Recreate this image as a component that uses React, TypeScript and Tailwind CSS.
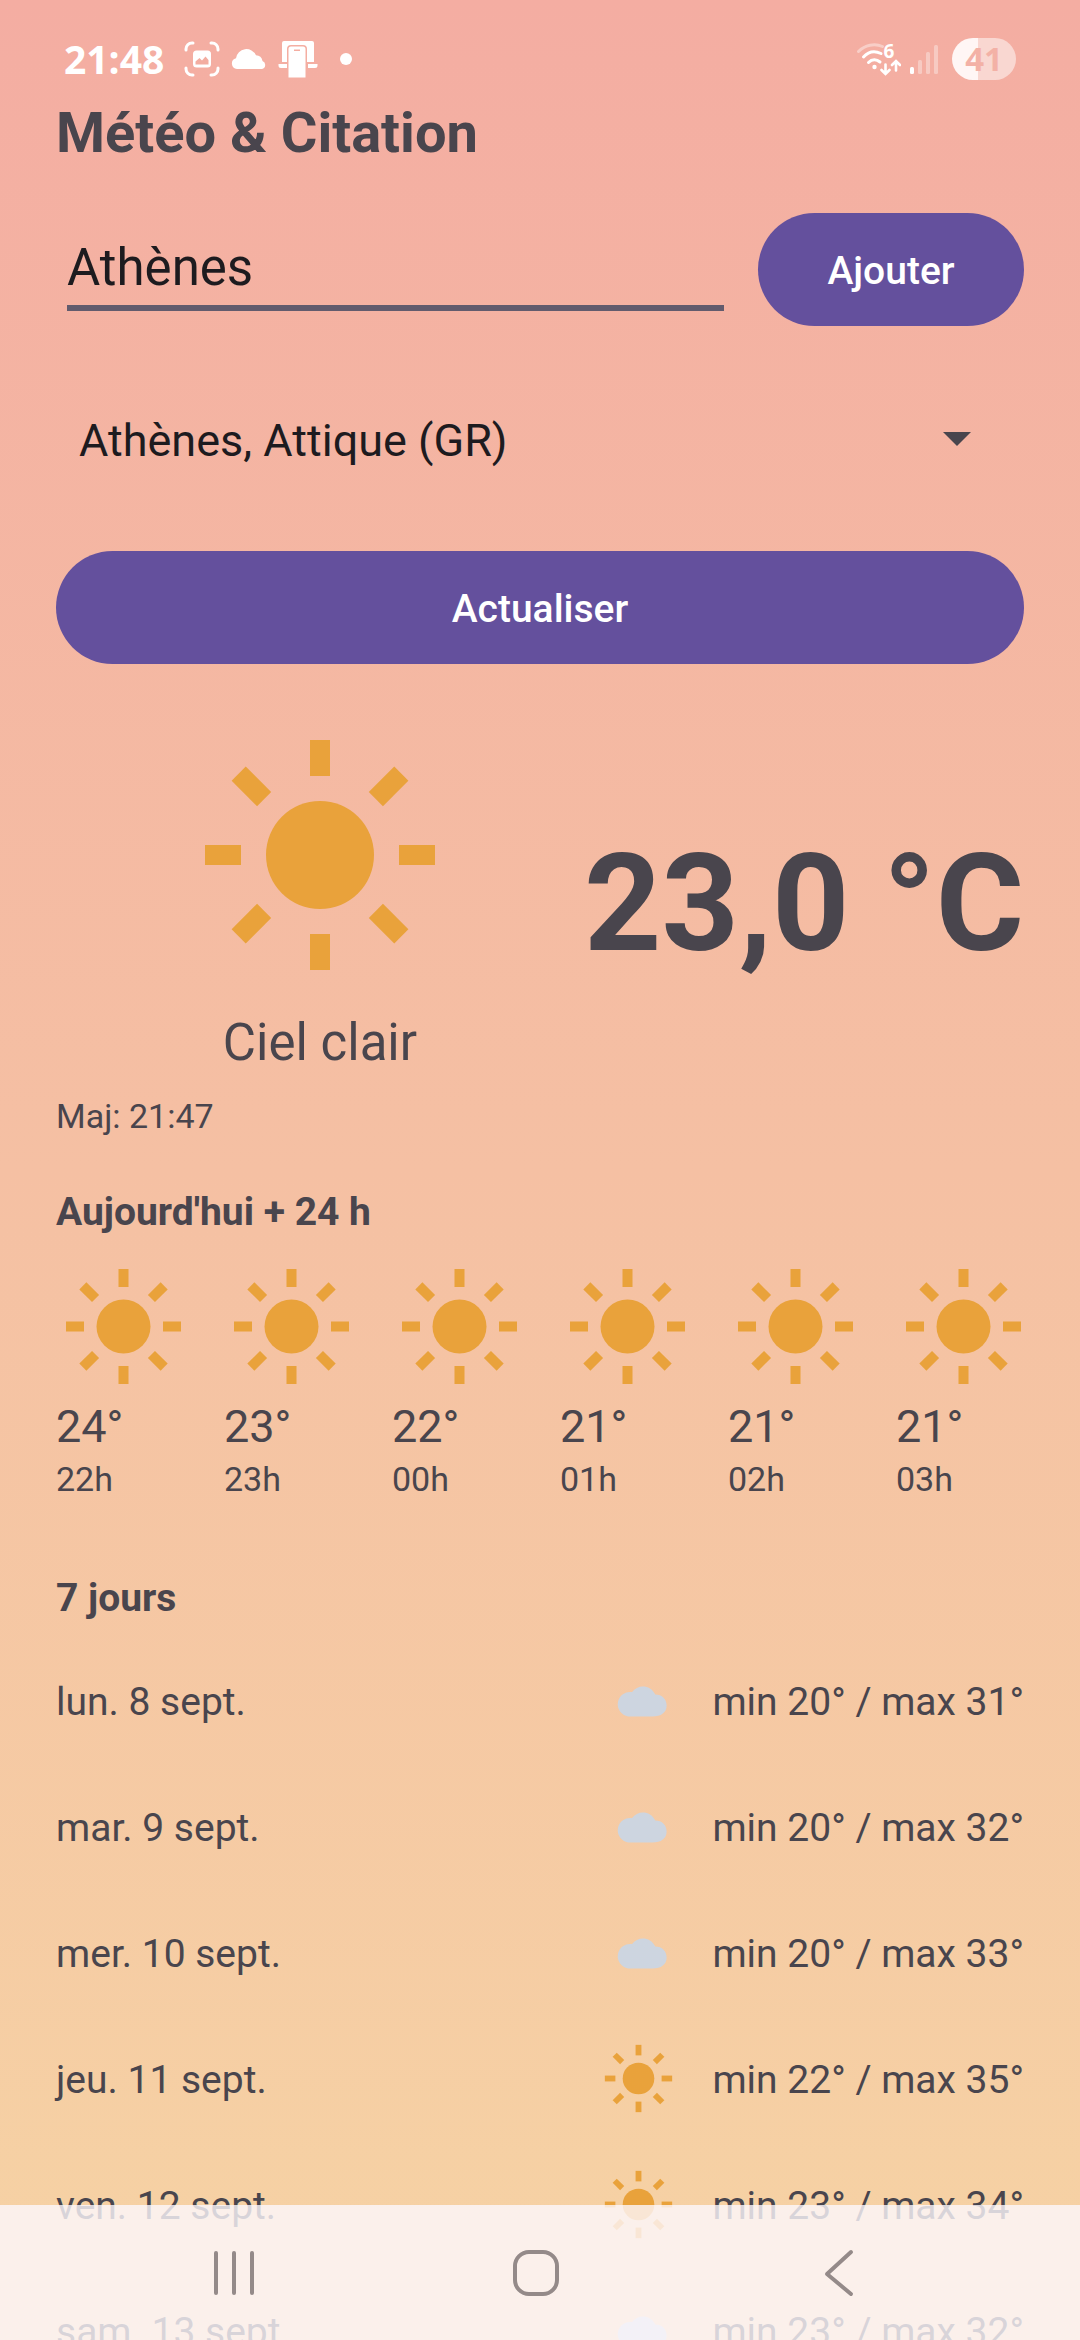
import { useState } from "react";

const RAY_ANGLES = [0, 45, 90, 135, 180, 225, 270, 315];

function Sun({ className }: { className: string }) {
  return (
    <svg viewBox="-135 -135 270 270" className={className} fill="#e9a23b" aria-hidden="true">
      <circle r="54" />
      {RAY_ANGLES.map((angle) => (
        <rect key={angle} x="-10" y="-115" width="20" height="36" transform={`rotate(${angle})`} />
      ))}
    </svg>
  );
}

function Cloud({ className }: { className: string }) {
  return (
    <svg viewBox="-40 -40 80 80" className={className} fill="#cdd5e0" aria-hidden="true">
      <path d="M-10.500 16.200A12.500 12.500 0 0 1-6.500-8.500C-1-16.500 12-16.500 17-6C24-6 28.500-1 28.500 5C28.500 12 23 16.200 14 16.200z" />
    </svg>
  );
}

function CaptureIcon() {
  return (
    <svg viewBox="0 0 36 36" className="size-9" fill="none" aria-hidden="true">
      <g stroke="#fff" strokeWidth="3" strokeLinecap="round">
        <path d="M2 9V8a6 6 0 0 1 6-6h1M27 2h1a6 6 0 0 1 6 6v1M34 27v1a6 6 0 0 1-6 6h-1M9 34H8a6 6 0 0 1-6-6v-1" />
      </g>
      <rect x="9" y="9.500" width="18" height="17" rx="3.500" fill="#fff" />
      <path d="M11.500 23.500v-3l4-3.500 2.500 2.500 3.500-4 3 3.500v4.500z" fill="#f3ada1" />
    </svg>
  );
}

function StatusCloud() {
  return (
    <svg viewBox="0 0 36 22" className="h-[22px] w-9" fill="#fff" aria-hidden="true">
      <path d="M6 21a5.500 5.500 0 0 1-1-10.800A10.500 10.500 0 0 1 25 7.300a7 7 0 0 1 6.500 5.700A4.200 4.200 0 0 1 31 21z" />
    </svg>
  );
}

function LinkedDevices() {
  return (
    <svg viewBox="0 0 40 38" className="h-[38px] w-10" fill="#fff" aria-hidden="true">
      <path d="M4 22V3a2 2 0 0 1 2-2h28a2 2 0 0 1 2 2v19h-7V9a4 4 0 0 0-4-4H13a4 4 0 0 0-4 4v13z" />
      <path d="M0.500 24H9v4H3a2.500 2.500 0 0 1-2.500-2.500zM30 24h9.500v1.500A2.500 2.500 0 0 1 37 28h-7z" />
      <path d="M13 6.500h12a2.500 2.500 0 0 1 2.500 2.500v28.500h-17V9A2.500 2.500 0 0 1 13 6.500zM16 9.500v1.500h6V9.500z" fillRule="evenodd" />
    </svg>
  );
}

function WifiIcon() {
  return (
    <svg viewBox="0 0 44 40" className="h-10 w-11" fill="none" aria-hidden="true">
      <g stroke="#fff" strokeWidth="3" strokeLinecap="round">
        <path d="M1.500 12.500C8 6 17.500 4 25.500 7.500" opacity="0.400" />
        <path d="M6.500 18C11 13 17.500 11.500 24 14.500" />
        <path d="M11.500 23.500c3.500-3.500 8-3.500 11.500-0.500" />
        <path d="M28.500 25.500v8.500M24.500 31l4 4 4-4M39 31.500v-8.500M35 26l4-4 4 4" strokeWidth="2.600" />
      </g>
      <circle cx="17.500" cy="28" r="2.200" fill="#fff" />
      <text x="26.500" y="19" fontSize="19" fontWeight="700" fontFamily="'Open Sans', sans-serif" fill="#fff">
        6
      </text>
    </svg>
  );
}

function SignalIcon() {
  return (
    <svg viewBox="0 0 28 30" className="h-[30px] w-7" fill="#fff" aria-hidden="true">
      <rect x="0" y="23" width="4" height="7" rx="1.500" />
      <g opacity="0.350">
        <rect x="8" y="16" width="4" height="14" rx="1.500" />
        <rect x="16" y="8" width="4" height="22" rx="1.500" />
        <rect x="24" y="1" width="4" height="29" rx="1.500" />
      </g>
    </svg>
  );
}

function StatusBar() {
  return (
    <header className="flex h-[100px] items-center justify-between pt-[18px] pr-16 pl-16 text-white">
      <div className="flex items-center">
        <time className="font-['Open_Sans',sans-serif] text-[39px] leading-[42px] font-bold">21:48</time>
        <span className="ml-5 flex items-center gap-[11px]">
          <CaptureIcon />
          <StatusCloud />
          <LinkedDevices />
        </span>
        <span className="ml-[22px] size-3 rounded-full bg-white" />
      </div>
      <div className="flex items-center">
        <WifiIcon />
        <span className="ml-[9px]">
          <SignalIcon />
        </span>
        <span className="ml-3.5 flex h-[42px] w-16 items-center justify-center rounded-full bg-[linear-gradient(90deg,#fff6f5_41%,#f9d7d1_41%)] font-['Open_Sans',sans-serif] text-[33px] leading-[42px] font-bold text-[#f3b1a6]">
          41
        </span>
      </div>
    </header>
  );
}

const HOURS = [
  { temp: "24°", hour: "22h" },
  { temp: "23°", hour: "23h" },
  { temp: "22°", hour: "00h" },
  { temp: "21°", hour: "01h" },
  { temp: "21°", hour: "02h" },
  { temp: "21°", hour: "03h" },
];

const DAYS = [
  { day: "lun. 8 sept.", sky: "cloud", range: "min 20° / max 31°" },
  { day: "mar. 9 sept.", sky: "cloud", range: "min 20° / max 32°" },
  { day: "mer. 10 sept.", sky: "cloud", range: "min 20° / max 33°" },
  { day: "jeu. 11 sept.", sky: "sun", range: "min 22° / max 35°" },
  { day: "ven. 12 sept.", sky: "sun", range: "min 23° / max 34°" },
  { day: "sam. 13 sept.", sky: "cloud", range: "min 23° / max 32°" },
];

function NavBar() {
  return (
    <nav className="fixed inset-x-0 bottom-0 flex h-[135px] items-center justify-center bg-[#fdf8fd]/80 pr-2">
      <button type="button" aria-label="Applications récentes" className="flex h-full w-[302px] items-center justify-center">
        <svg viewBox="0 0 48 48" className="size-12" stroke="#948a89" strokeWidth="4" strokeLinecap="round">
          <path d="M6 4v40M24 4v40M42 4v40" />
        </svg>
      </button>
      <button type="button" aria-label="Accueil" className="flex h-full w-[302px] items-center justify-center">
        <svg viewBox="0 0 48 48" className="size-12" stroke="#948a89" strokeWidth="4" fill="none">
          <rect x="3" y="3" width="42" height="42" rx="14" />
        </svg>
      </button>
      <button type="button" aria-label="Retour" className="flex h-full w-[302px] items-center justify-center">
        <svg viewBox="0 0 48 48" className="size-12" stroke="#948a89" strokeWidth="4" strokeLinecap="round" strokeLinejoin="round" fill="none">
          <path d="M37 3L13 25l24 20" />
        </svg>
      </button>
    </nav>
  );
}

export default function App() {
  const [query, setQuery] = useState("Athènes");

  return (
    <div className="h-screen overflow-hidden bg-[linear-gradient(180deg,#f4ada2_0%,#f6d3a4_100%)] font-[Roboto,sans-serif] text-[#49454d]">
      <StatusBar />
      <main className="px-14">
        <h1 className="text-[56px] leading-[66px] font-bold">Météo &amp; Citation</h1>

        <form className="mt-[47px] flex items-center gap-[34px]" onSubmit={(event) => event.preventDefault()}>
          <input
            type="text"
            aria-label="Ville"
            value={query}
            onChange={(event) => setQuery(event.target.value)}
            className="ml-[11px] h-[82px] min-w-0 flex-1 border-b-[6px] border-[#625b6d] bg-transparent pt-0.5 text-[51px] text-[#1d1b1f] outline-none"
          />
          <button type="submit" className="h-[113px] w-[266px] rounded-full bg-[#64509d] pt-1 text-[39px] font-medium text-white">
            Ajouter
          </button>
        </form>

        <div className="relative mt-14">
          <select
            aria-label="Ville enregistrée"
            className="h-[116px] w-full appearance-none bg-transparent pt-0.5 pr-24 pl-[23px] text-[45px] text-[#1d1b1f] outline-none"
          >
            <option>Athènes, Attique (GR)</option>
          </select>
          <svg viewBox="0 0 28 14" className="pointer-events-none absolute top-[50px] right-[53px] h-3.5 w-7" fill="#49454d" aria-hidden="true">
            <path d="M0 0h28L14 14z" />
          </svg>
        </div>

        <button type="button" className="mt-[53px] h-[113px] w-full rounded-full bg-[#64509d] pt-1 text-[39px] font-medium text-white">
          Actualiser
        </button>

        <section className="mt-14 flex items-center">
          <div className="flex flex-1 flex-col items-center pb-3">
            <Sun className="size-[270px]" />
            <p className="mt-5 text-[51px] leading-[66px]">Ciel clair</p>
          </div>
          <p className="text-[135px] leading-[158px] font-bold whitespace-nowrap">23,0 °C</p>
        </section>
        <p className="mt-1.5 text-[34px] leading-[44px]">Maj: 21:47</p>

        <section className="mt-12">
          <h2 className="text-[39px] leading-[52px] font-bold">Aujourd'hui + 24 h</h2>
          <ul className="mt-[21px] flex">
            {HOURS.map(({ temp, hour }) => (
              <li key={hour} className="w-[168px] shrink-0">
                <Sun className="size-[135px]" />
                <p className="mt-1.5 text-[45px] leading-[53px]">{temp}</p>
                <p className="mt-1 text-[34px] leading-[44px]">{hour}</p>
              </li>
            ))}
          </ul>
        </section>

        <section className="mt-[71px]">
          <h2 className="text-[39px] leading-[52px] font-bold">7 jours</h2>
          <ul className="mt-[13px]">
            {DAYS.map(({ day, sky, range }) => (
              <li key={day} className="flex h-[126px] items-center text-[39px] leading-[52px]">
                <span className="flex-1 pt-1">{day}</span>
                {sky === "sun" ? <Sun className="size-[79px]" /> : <Cloud className="size-[79px]" />}
                <span className="ml-[34px] pt-1">{range}</span>
              </li>
            ))}
          </ul>
        </section>
      </main>
      <NavBar />
    </div>
  );
}
